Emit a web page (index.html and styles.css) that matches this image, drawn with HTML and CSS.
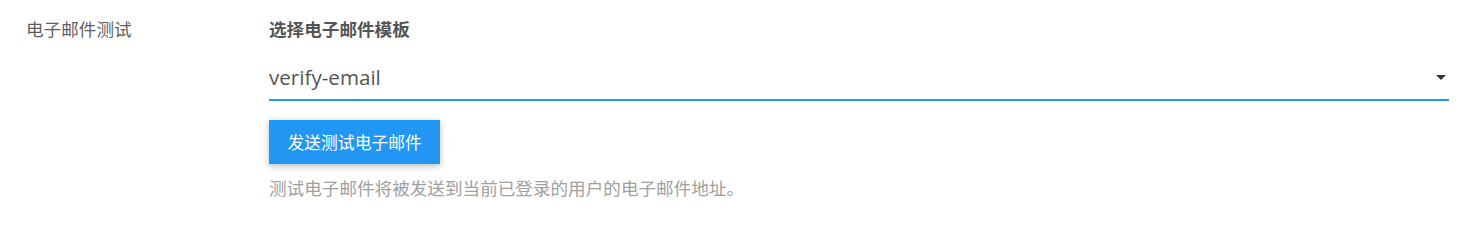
FILE: index.html
```html
<!DOCTYPE html>
<html lang="zh">
<head>
<meta charset="utf-8">
<link rel="stylesheet" href="styles.css">
</head>
<body>
<div class="row">
  <div class="label">电子邮件测试</div>
  <div class="field">
    <div class="title">选择电子邮件模板</div>
    <div class="select">
      <span class="value">verify-email</span>
      <svg class="caret" width="10" height="5" viewBox="0 0 10 5"><path d="M0 0H10L5 5Z" fill="#333"/></svg>
    </div>
    <button class="btn">发送测试电子邮件</button>
    <div class="help">测试电子邮件将被发送到当前已登录的用户的电子邮件地址。</div>
  </div>
</div>
</body>
</html>
```
FILE: styles.css
```css
html, body {
  margin: 0;
  padding: 0;
  background: #fff;
}
body {
  font-family: "Open Sans", "Noto Sans CJK SC", sans-serif;
  color: #555;
}
.row {
  display: flex;
  padding: 16px 13px 0 26px;
}
.label {
  width: 243px;
  flex: none;
  font-size: 17.6px;
  line-height: 26px;
  color: #5f5f5f;
}
.field {
  flex: 1;
  display: flex;
  flex-direction: column;
  align-items: flex-start;
}
.title {
  font-size: 17.6px;
  line-height: 26px;
  font-weight: bold;
  color: #555;
}
.select {
  align-self: stretch;
  display: flex;
  align-items: center;
  justify-content: space-between;
  margin-top: 14px;
  height: 43px;
  border-bottom: 2px solid #2196f3;
}
.value {
  font-size: 20.6px;
  color: #555;
  padding-bottom: 2px;
}
.caret {
  margin-right: 3px;
}
.btn {
  margin-top: 19px;
  height: 44px;
  padding: 0 18.5px;
  border: none;
  background: #2196f3;
  color: #fff;
  font-family: "Noto Sans CJK SC", sans-serif;
  font-size: 16.8px;
  box-shadow: 0 2px 5px rgba(0,0,0,0.16), 0 2px 10px rgba(0,0,0,0.12);
  cursor: pointer;
}
.help {
  margin-top: 12px;
  font-size: 17.6px;
  line-height: 24px;
  color: #a0a0a0;
}
```
